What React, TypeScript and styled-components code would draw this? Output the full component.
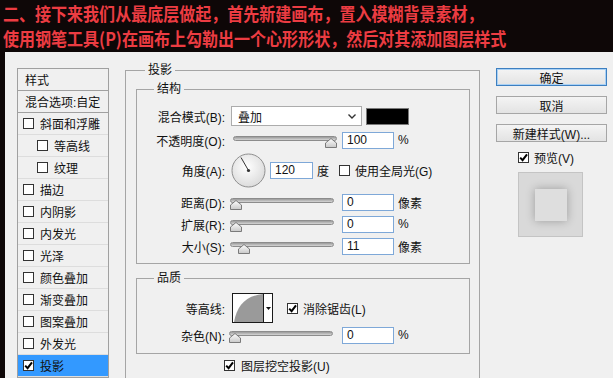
import React from 'react';
import styled, { createGlobalStyle } from 'styled-components';

const GlobalStyle = createGlobalStyle`
  html, body {
    margin: 0;
    padding: 0;
    background: #0e0707;
  }
  body {
    width: 613px;
    height: 378px;
    overflow: hidden;
    font-family: "Liberation Sans", "Noto Sans CJK SC", sans-serif;
  }
`;

const Page = styled.div`
  width: 613px;
  height: 378px;
  display: flex;
  flex-direction: column;
  overflow: hidden;
`;

const Banner = styled.div`
  height: 52px;
  flex-shrink: 0;
  box-sizing: border-box;
  padding: 1px 0 0 3px;
  color: #ec3c42;
  font-family: "Noto Sans CJK SC", sans-serif;
  font-weight: 700;
  font-size: 18px;
  line-height: 25px;
  white-space: nowrap;
`;

const BannerLine = styled.div`
  transform: scaleX(0.89);
  transform-origin: left center;
`;

const Dialog = styled.div`
  flex: 1;
  margin-left: 5px;
  background: #f0f0f0;
  display: flex;
  align-items: flex-start;
  gap: 16px;
  padding: 10px 0 0 12px;
  font-size: 12px;
  color: #111;
  overflow: hidden;
`;

/* ---------- left style list ---------- */

const StyleList = styled.div`
  margin-top: 6px;
  width: 92px;
  box-sizing: border-box;
  border: 1px solid #a0a0a0;
  background: #f0f0f0;
  flex-shrink: 0;
`;

const ListRow = styled.div<{ $indent?: boolean; $selected?: boolean; $strong?: boolean }>`
  height: 22px;
  box-sizing: border-box;
  display: flex;
  align-items: center;
  gap: 6px;
  padding-left: ${(p) => (p.$indent ? 19 : 5)}px;
  border-bottom: 1px solid ${(p) => (p.$strong ? '#a0a0a0' : '#dddddd')};
  background: ${(p) => (p.$selected ? '#3399ff' : 'transparent')};
  color: #111;
  white-space: nowrap;
`;

const ListHead = styled.div`
  height: 22px;
  box-sizing: border-box;
  display: flex;
  align-items: center;
  padding-left: 7px;
  border-bottom: 1px solid #a0a0a0;
  white-space: nowrap;
`;

/* ---------- checkbox ---------- */

const Box = styled.span`
  width: 11px;
  height: 11px;
  box-sizing: border-box;
  border: 1px solid #333;
  background: #fff;
  display: inline-flex;
  align-items: center;
  justify-content: center;
  flex-shrink: 0;
`;

function Check({ on }: { on?: boolean }) {
  return (
    <Box>
      {on && (
        <svg width="9" height="9" viewBox="0 0 9 9">
          <path d="M1.2 4.6 L3.6 7.2 L8 1.4" fill="none" stroke="#000" strokeWidth="2" />
        </svg>
      )}
    </Box>
  );
}

/* ---------- group boxes ---------- */

const Group = styled.fieldset<{ $mt?: number; $pad: string }>`
  margin: ${(p) => p.$mt ?? 0}px 0 0;
  padding: ${(p) => p.$pad};
  border: 1px solid #a5a5a5;
  min-width: 0;
  box-sizing: border-box;
`;

const Outer = styled(Group)`
  width: 355px;
  flex-shrink: 0;
`;

const Legend = styled.legend<{ $ml: number }>`
  margin-left: ${(p) => p.$ml}px;
  padding: 0 3px;
  font-size: 12px;
  line-height: 16px;
`;

const FormRow = styled.div<{ $h: number; $mt?: number }>`
  height: ${(p) => p.$h}px;
  margin-top: ${(p) => p.$mt ?? 0}px;
  display: flex;
  align-items: center;
  white-space: nowrap;
`;

const Label = styled.span`
  width: 88px;
  flex-shrink: 0;
  text-align: right;
`;

const Select = styled.div`
  margin-left: 6px;
  width: 131px;
  height: 20px;
  box-sizing: border-box;
  border: 1px solid #acacac;
  background: #fff;
  display: flex;
  align-items: center;
  justify-content: space-between;
  padding: 0 5px 0 6px;
`;

const Swatch = styled.div`
  margin-left: 4px;
  width: 43px;
  height: 17px;
  box-sizing: border-box;
  border: 1px solid #7a7a7a;
  background: #000;
`;

const NumInput = styled.div<{ $w?: number; $ml?: number }>`
  margin-left: ${(p) => p.$ml ?? 0}px;
  width: ${(p) => p.$w ?? 52}px;
  height: 17px;
  box-sizing: border-box;
  border: 1px solid #7ea8d8;
  background: #fff;
  display: flex;
  align-items: center;
  padding-left: 4px;
  font-size: 12px;
`;

const Unit = styled.span`
  margin-left: 4px;
`;

const SliderWrap = styled.div<{ $ml: number }>`
  position: relative;
  margin-left: ${(p) => p.$ml}px;
  width: 104px;
  height: 18px;
  flex-shrink: 0;
`;

const Track = styled.div`
  position: absolute;
  left: 0;
  right: 0;
  top: 5px;
  height: 5px;
  border-radius: 3px;
  box-sizing: border-box;
  border: 1px solid #8c8c8c;
  background: linear-gradient(#9a9a9a, #d6d6d6);
`;

const Thumb = styled.svg`
  position: absolute;
  top: 7px;
`;

function Slider({ value, ml }: { value: number; ml: number }) {
  return (
    <SliderWrap $ml={ml}>
      <Track />
      <Thumb width="12" height="10" viewBox="0 0 12 10" style={{ left: `${value * 92}px` }}>
        <defs>
          <linearGradient id="tg" x1="0" y1="0" x2="0" y2="1">
            <stop offset="0" stopColor="#ffffff" />
            <stop offset="1" stopColor="#c8c8c8" />
          </linearGradient>
        </defs>
        <path d="M6 0.5 L11.5 5 L11.5 9.5 L0.5 9.5 L0.5 5 Z" fill="url(#tg)" stroke="#7a7a7a" />
      </Thumb>
    </SliderWrap>
  );
}

const Dial = styled.svg`
  margin-left: 6px;
  flex-shrink: 0;
`;

const Inline = styled.span<{ $ml: number }>`
  margin-left: ${(p) => p.$ml}px;
  display: inline-flex;
  align-items: center;
  gap: 5px;
`;

const Contour = styled.div`
  margin-left: 7px;
  width: 41px;
  height: 30px;
  box-sizing: border-box;
  border: 1px solid #1a1a1a;
  background: #fff;
  display: flex;
`;

const ContourCurve = styled.svg`
  border-right: 1px solid #1a1a1a;
`;

const ContourArrow = styled.div`
  flex: 1;
  display: flex;
  align-items: center;
  justify-content: center;
`;

const KnockRow = styled.div`
  height: 22px;
  display: flex;
  align-items: center;
  gap: 6px;
  padding-left: 88px;
  white-space: nowrap;
`;

/* ---------- right column ---------- */

const Side = styled.div`
  margin-top: 6px;
  width: 111px;
  display: flex;
  flex-direction: column;
  gap: 10px;
  flex-shrink: 0;
`;

const Button = styled.div<{ $primary?: boolean }>`
  height: 18px;
  box-sizing: border-box;
  border: 1px solid ${(p) => (p.$primary ? '#3d7fc0' : '#a6a6a6')};
  background: linear-gradient(#f4f4f4, #e3e3e3);
  display: flex;
  align-items: center;
  justify-content: center;
  font-size: 12px;
  box-shadow: ${(p) => (p.$primary ? 'inset 0 0 0 1px #a9d1f5' : 'none')};
`;

const PreviewToggle = styled.div`
  margin-top: -4px;
  height: 18px;
  display: flex;
  align-items: center;
  gap: 5px;
  padding-left: 22px;
  white-space: nowrap;
`;

const PreviewBox = styled.div`
  margin: -4px 0 0 22px;
  width: 65px;
  height: 65px;
  box-sizing: border-box;
  border: 1px solid #c4c4c4;
  background: #d9d9d9;
  display: flex;
  align-items: center;
  justify-content: center;
`;

const PreviewShape = styled.div`
  width: 32px;
  height: 32px;
  background: #dedede;
  box-shadow: 0 0 9px rgba(0, 0, 0, 0.28);
`;

const effects: { name: string; indent?: boolean; checked?: boolean; selected?: boolean }[] = [
  { name: '斜面和浮雕' },
  { name: '等高线', indent: true },
  { name: '纹理', indent: true },
  { name: '描边' },
  { name: '内阴影' },
  { name: '内发光' },
  { name: '光泽' },
  { name: '颜色叠加' },
  { name: '渐变叠加' },
  { name: '图案叠加' },
  { name: '外发光' },
  { name: '投影', checked: true, selected: true },
];

export default function App() {
  return (
    <Page>
      <GlobalStyle />
      <Banner>
        <BannerLine>二、接下来我们从最底层做起，首先新建画布，置入模糊背景素材，</BannerLine>
        <BannerLine>使用钢笔工具(P)在画布上勾勒出一个心形形状，然后对其添加图层样式</BannerLine>
      </Banner>
      <Dialog>
        <StyleList>
          <ListHead>样式</ListHead>
          <ListRow $strong>
            <span style={{ paddingLeft: 2 }}>混合选项:自定</span>
          </ListRow>
          {effects.map((e) => (
            <ListRow key={e.name} $indent={e.indent} $selected={e.selected}>
              <Check on={e.checked} />
              <span>{e.name}</span>
            </ListRow>
          ))}
        </StyleList>

        <Outer $pad="0 9px 30px 10px">
          <Legend $ml={9}>投影</Legend>
          <Group $mt={3} $pad="0 0 6px 0">
            <Legend $ml={17}>结构</Legend>
            <FormRow $h={20} $mt={9}>
              <Label>混合模式(B):</Label>
              <Select>
                <span>叠加</span>
                <svg width="8" height="5" viewBox="0 0 8 5">
                  <path d="M0.5 0.5 L4 4 L7.5 0.5" fill="none" stroke="#333" strokeWidth="1.4" />
                </svg>
              </Select>
              <Swatch />
            </FormRow>
            <FormRow $h={22} $mt={3}>
              <Label>不透明度(O):</Label>
              <Slider value={1} ml={8} />
              <NumInput $ml={5}>100</NumInput>
              <Unit>%</Unit>
            </FormRow>
            <FormRow $h={34} $mt={2}>
              <Label>角度(A):</Label>
              <Dial width="35" height="35" viewBox="0 0 35 35">
                <defs>
                  <radialGradient id="dg" cx="0.45" cy="0.4" r="0.6">
                    <stop offset="0" stopColor="#ffffff" />
                    <stop offset="1" stopColor="#dcdcdc" />
                  </radialGradient>
                </defs>
                <circle cx="17.5" cy="17.5" r="16.5" fill="url(#dg)" stroke="#8f8f8f" />
                <line x1="17.5" y1="17.5" x2="10" y2="4.5" stroke="#333" strokeWidth="1" />
                <circle cx="17.5" cy="17.5" r="1.6" fill="#333" />
              </Dial>
              <NumInput $w={43} $ml={4}>120</NumInput>
              <Unit>度</Unit>
              <Inline $ml={10}>
                <Check />
                <span>使用全局光(G)</span>
              </Inline>
            </FormRow>
            <FormRow $h={22} $mt={4}>
              <Label>距离(D):</Label>
              <Slider value={0} ml={5} />
              <NumInput $ml={8}>0</NumInput>
              <Unit>像素</Unit>
            </FormRow>
            <FormRow $h={22}>
              <Label>扩展(R):</Label>
              <Slider value={0} ml={5} />
              <NumInput $ml={8}>0</NumInput>
              <Unit>%</Unit>
            </FormRow>
            <FormRow $h={22}>
              <Label>大小(S):</Label>
              <Slider value={0.09} ml={5} />
              <NumInput $ml={8}>11</NumInput>
              <Unit>像素</Unit>
            </FormRow>
          </Group>

          <Group $mt={6} $pad="0 0 7px 0">
            <Legend $ml={17}>品质</Legend>
            <FormRow $h={30} $mt={7}>
              <Label>等高线:</Label>
              <Contour>
                <ContourCurve width="30" height="28" viewBox="0 0 30 28">
                  <path d="M1 28 C 4 12, 12 2, 30 0 L30 28 Z" fill="#9a9a9a" />
                </ContourCurve>
                <ContourArrow>
                  <svg width="5" height="3" viewBox="0 0 5 3">
                    <path d="M0 0 L5 0 L2.5 3 Z" fill="#111" />
                  </svg>
                </ContourArrow>
              </Contour>
              <Inline $ml={14}>
                <Check on />
                <span>消除锯齿(L)</span>
              </Inline>
            </FormRow>
            <FormRow $h={22} $mt={1}>
              <Label>杂色(N):</Label>
              <Slider value={0} ml={4} />
              <NumInput $ml={9}>0</NumInput>
              <Unit>%</Unit>
            </FormRow>
          </Group>

          <KnockRow>
            <Check on />
            <span>图层挖空投影(U)</span>
          </KnockRow>
        </Outer>

        <Side>
          <Button $primary>确定</Button>
          <Button>取消</Button>
          <Button>新建样式(W)...</Button>
          <PreviewToggle>
            <Check on />
            <span>预览(V)</span>
          </PreviewToggle>
          <PreviewBox>
            <PreviewShape />
          </PreviewBox>
        </Side>
      </Dialog>
    </Page>
  );
}
